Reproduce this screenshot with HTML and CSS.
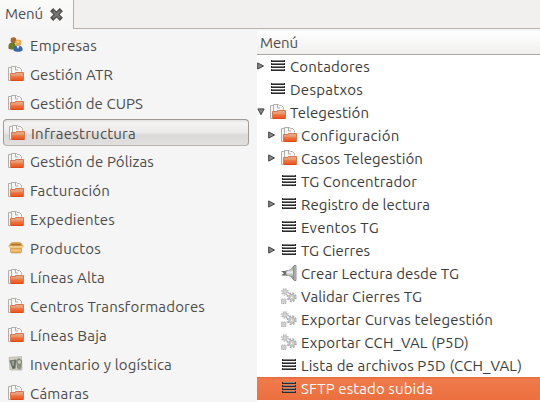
FILE: index.html
```html
<!DOCTYPE html>
<html lang="es">
<head>
<meta charset="utf-8">
<title>Menú</title>
<link rel="stylesheet" href="styles.css">
</head>
<body>
<svg class="defs" width="0" height="0" aria-hidden="true">
  <defs>
    <linearGradient id="orange" x2="0" y2="1"><stop offset="0" stop-color="#e9b08f"/><stop offset=".4" stop-color="#e8946a"/><stop offset=".55" stop-color="#ee713c"/><stop offset="1" stop-color="#ec5420"/></linearGradient>
    <linearGradient id="metal" x2="0" y2="1"><stop offset="0" stop-color="#777"/><stop offset=".45" stop-color="#eee"/><stop offset="1" stop-color="#666"/></linearGradient>
    <symbol id="folder" viewBox="0 0 16 16">
      <path d="M.5 14.500v-13h3v-1h5.500l1 1h1.500l2 2v11z" fill="#f6f6f5"/>
      <path d="M2 14.500H.5v-13h3M3.500 7V.5h5l1 1M7.500 1v3h2.500M9.500 1.500h2l2 2v2" fill="none" stroke="#b0aeab"/>
      <path d="M2.500 14.500V7.500h5V6.500h8v8z" fill="url(#orange)" stroke="#d67850"/>
      <path d="M3 14.500h12" stroke="#dc4a18"/>
    </symbol>
    <symbol id="list" viewBox="0 0 14 12">
      <path d="M0 0h14v2H0zM0 3h14v2H0zM0 6h14v2H0zM0 9h14v2H0z" fill="#2b2b2b"/>
      <path d="M1 .5h12M1 3.500h12M1 6.500h12M1 9.500h12" stroke="#858585" stroke-width="1"/>
    </symbol>
    <symbol id="gear" viewBox="0 0 10 10">
      <circle cx="5" cy="5" r="4" fill="none" stroke="#aaa" stroke-width="1.500" stroke-dasharray="1.800 1.342"/>
      <circle cx="5" cy="5" r="2.700" fill="#ddd" stroke="#b5b5b5" stroke-width="1.200"/>
      <circle cx="5" cy="5" r="1.200" fill="#fff" stroke="#aaa" stroke-width=".6"/>
    </symbol>
    <symbol id="gears" viewBox="0 0 16 16">
      <use href="#gear" x="0" y="0" width="8" height="8"/>
      <use href="#gear" x="5.500" y="4" width="10.500" height="10.500"/>
      <path d="M.5 11h4.500v4.500H.5z" fill="#d0d0d0" stroke="#b2b2b2" stroke-dasharray="1.500 .7"/>
    </symbol>
    <symbol id="horn" viewBox="0 0 16 16">
      <path d="M0 6h4.500l2-1v6l-2-.5H0l3-2.200z" fill="#686868"/>
      <path d="M5 6c4-.5 6-2 7.500-5v14c-1.500-3-3.500-4.500-7.500-5z" fill="url(#metal)" stroke="#888" stroke-width=".7"/>
      <path d="M13 .500h2v15h-2z" fill="#ccc" stroke="#777" stroke-width=".8"/>
    </symbol>
    <symbol id="people" viewBox="0 0 16 16">
      <path d="M.5 11.500c-.5-4 1-6 3.500-6s4 1 4 6c-2 1.300-6 1.300-7.500 0z" fill="#6d7b25"/>
      <circle cx="5.500" cy="3.200" r="2.900" fill="#a56a30"/>
      <path d="M5.500 13.500c0-4 1.500-5 4.500-5s5 1.500 4.500 5c-2 1.700-7 1.700-9 0z" fill="#3b66ad"/>
      <path d="M8.500 9h3l-1.500 3z" fill="#e9eef5"/>
      <circle cx="10.300" cy="5.700" r="3.100" fill="#e9a94a"/><circle cx="10" cy="5" r="1.300" fill="#f6cf87"/>
    </symbol>
    <symbol id="box" viewBox="0 0 16 16">
      <path d="M2.500 3.500l2-1h7l2 1 1.700 3-1.700 1v4.700l-1.500.8h-8l-1.500-.8V7.500L.8 6.500z" fill="#e2a650" stroke="#cf9648" stroke-width=".7"/>
      <path d="M3.500 3.800h9l.8 1.700H2.700z" fill="#ab7836"/>
      <path d="M1 6h14l-1 1.700H2z" fill="#f7d397"/><path d="M3 9.500h10v2H3z" fill="#f1c681"/>
    </symbol>
    <symbol id="stock" viewBox="0 0 16 16">
      <path d="M1 1.500l12.500-1 .5 13.500H2z" fill="#d3d0c4" stroke="#b5b2a5" stroke-width=".7"/>
      <path d="M1.500 4.500l6.500-1-.5 9-3 .5z" fill="#666b60"/><path d="M3.500 5l2.700-.5-.5 5-1.200.2z" fill="#a3a79c"/>
      <path d="M8 4l3-2 3 2.500-.5 7.500-2 2-2.500-2z" fill="#8f9387"/><circle cx="11.300" cy="6" r="2.300" fill="#c8c9c0" stroke="#70746a" stroke-width=".7"/>
    </symbol>
    <symbol id="closed" viewBox="0 0 8 8"><path d="M.7.900L6.500 4 .7 7.100z" fill="#888" stroke="#3f3f3f"/></symbol>
    <symbol id="open" viewBox="0 0 8 8"><path d="M.9.900h6.200L4 6.700z" fill="#888" stroke="#3f3f3f"/></symbol>
  </defs>
</svg>
<header class="tabs">
  <div class="tab"><span class="label" data-width="38">Menú</span>
    <svg class="close" viewBox="0 0 13 13"><path d="M3.200 3.200l6.600 6.600M9.800 3.200l-6.600 6.600" stroke="#4d4c49" stroke-width="4.400" stroke-linecap="square"/><path d="M3 3l7 7M10 3l-7 7" stroke="#777571" stroke-width="2.400"/></svg>
  </div>
  <div class="tab-space"></div>
</header>
<main class="panes">
  <nav class="shortcuts">
    <div class="item"><svg><use href="#people"/></svg><span class="label" data-width="67">Empresas</span></div>
    <div class="item"><svg><use href="#folder"/></svg><span class="label" data-width="83">Gestión ATR</span></div>
    <div class="item"><svg><use href="#folder"/></svg><span class="label" data-width="113">Gestión de CUPS</span></div>
    <div class="item current"><svg><use href="#folder"/></svg><span class="label" data-width="105">Infraestructura</span></div>
    <div class="item"><svg><use href="#folder"/></svg><span class="label" data-width="124">Gestión de Pólizas</span></div>
    <div class="item"><svg><use href="#folder"/></svg><span class="label" data-width="80">Facturación</span></div>
    <div class="item"><svg><use href="#folder"/></svg><span class="label" data-width="85">Expedientes</span></div>
    <div class="item"><svg><use href="#box"/></svg><span class="label" data-width="71">Productos</span></div>
    <div class="item"><svg><use href="#folder"/></svg><span class="label" data-width="75">Líneas Alta</span></div>
    <div class="item"><svg><use href="#folder"/></svg><span class="label" data-width="175">Centros Transformadores</span></div>
    <div class="item"><svg><use href="#folder"/></svg><span class="label" data-width="77">Líneas Baja</span></div>
    <div class="item"><svg><use href="#stock"/></svg><span class="label" data-width="142">Inventario y logística</span></div>
    <div class="item"><svg><use href="#folder"/></svg><span class="label" data-width="59">Cámaras</span></div>
  </nav>
  <section class="tree">
    <div class="tree-head"><span class="label" data-width="38">Menú</span></div>
    <div class="node"><svg class="arrow"><use href="#closed"/></svg><svg class="list"><use href="#list"/></svg><span class="label" data-width="80">Contadores</span></div>
    <div class="node"><i class="arrow"></i><svg class="list"><use href="#list"/></svg><span class="label" data-width="73">Despatxos</span></div>
    <div class="node"><svg class="arrow"><use href="#open"/></svg><svg><use href="#folder"/></svg><span class="label" data-width="79">Telegestión</span></div>
    <div class="node child"><svg class="arrow"><use href="#closed"/></svg><svg><use href="#folder"/></svg><span class="label" data-width="98">Configuración</span></div>
    <div class="node child"><svg class="arrow"><use href="#closed"/></svg><svg><use href="#folder"/></svg><span class="label" data-width="122">Casos Telegestión</span></div>
    <div class="node child"><i class="arrow"></i><svg class="list"><use href="#list"/></svg><span class="label" data-width="116">TG Concentrador</span></div>
    <div class="node child"><svg class="arrow"><use href="#closed"/></svg><svg class="list"><use href="#list"/></svg><span class="label" data-width="129">Registro de lectura</span></div>
    <div class="node child"><i class="arrow"></i><svg class="list"><use href="#list"/></svg><span class="label" data-width="78">Eventos TG</span></div>
    <div class="node child"><svg class="arrow"><use href="#closed"/></svg><svg class="list"><use href="#list"/></svg><span class="label" data-width="69">TG Cierres</span></div>
    <div class="node child"><i class="arrow"></i><svg><use href="#horn"/></svg><span class="label" data-width="158">Crear Lectura desde TG</span></div>
    <div class="node child"><i class="arrow"></i><svg><use href="#gears"/></svg><span class="label" data-width="121">Validar Cierres TG</span></div>
    <div class="node child"><i class="arrow"></i><svg><use href="#gears"/></svg><span class="label" data-width="192">Exportar Curvas telegestión</span></div>
    <div class="node child"><i class="arrow"></i><svg><use href="#gears"/></svg><span class="label" data-width="168">Exportar CCH_VAL (P5D)</span></div>
    <div class="node child"><i class="arrow"></i><svg class="list"><use href="#list"/></svg><span class="label" data-width="221">Lista de archivos P5D (CCH_VAL)</span></div>
    <div class="node child selected"><i class="arrow"></i><svg class="list"><use href="#list"/></svg><span class="label" data-width="132">SFTP estado subida</span></div>
  </section>
</main>
<script src="script.js"></script>
</body>
</html>
```
FILE: styles.css
```css
* { box-sizing: border-box; }
body {
  margin: 0;
  width: 540px;
  height: 402px;
  overflow: hidden;
  display: flex;
  flex-direction: column;
  background: #f5f5f5;
  color: #4c4c4c;
  font: 15px/20px Ubuntu, "Noto Sans", sans-serif;
}
.defs { position: absolute; }
.label { white-space: nowrap; flex: none; }
.tabs { display: flex; height: 29px; flex: none; }
.tab {
  display: flex;
  align-items: center;
  gap: 7px;
  width: 74px;
  padding: 0 0 1px 5px;
  border-right: 1px solid #b3aeaa;
  background: linear-gradient(#fbfbfa, #f5f5f5);
}
.tab .label { width: 38px; }
.close { width: 13px; height: 13px; }
.tab-space { flex: 1; background: #f1f0ef; border-bottom: 1px solid #b7b2ae; }
.panes { display: flex; flex: 1; min-height: 0; }
.shortcuts { width: 257px; padding: 2px 8px 0 3px; flex: none; }
.item {
  display: flex;
  align-items: center;
  gap: 6px;
  height: 29px;
  padding-left: 5px;
}
.item svg, .node svg { width: 16px; height: 16px; flex: none; }
.item svg { margin-bottom: 1px; }
.item.current {
  height: 27px;
  margin: 1px 0;
  padding: 2px 0 0 5px;
  border: 1px solid #a09b96;
  border-bottom-color: #b8b5b1;
  border-radius: 4px;
  background: linear-gradient(#e2e0de, #f5f4f4 12%, #ebe9e8 50%, #dcdad8 60%, #e2e0de);
}
.tree { flex: 1; background: #fff; margin-top: 2px; color: #3c3c3c; }
.tree-head {
  height: 24px;
  padding: 2px 0 0 3px;
  border-bottom: 1px solid #aaa6a2;
  background: linear-gradient(#fff, #f0efee);
  color: #4c4c4c;
}
.node { display: flex; align-items: center; height: 23px; }
.node.child { padding-left: 11px; }
.node .arrow { width: 8px; height: 8px; flex: none; margin-bottom: 1px; }
.node .arrow + svg { margin: 0 4px 1px 5px; }
.node .arrow + .list { width: 14px; height: 12px; margin: 0 5px 1px 6px; }
.node.selected {
  background: linear-gradient(#e9683a, #f07a4b 10%, #ec6f3e);
  color: #fff;
}
```
FILE: script.js
```js
document.querySelectorAll("[data-width]").forEach(function (label) {
  var range = document.createRange();
  range.selectNodeContents(label);
  var natural = range.getBoundingClientRect().width;
  var spacing = (Number(label.dataset.width) - natural) / label.textContent.length;
  label.style.letterSpacing = spacing.toFixed(3) + "px";
});
```
